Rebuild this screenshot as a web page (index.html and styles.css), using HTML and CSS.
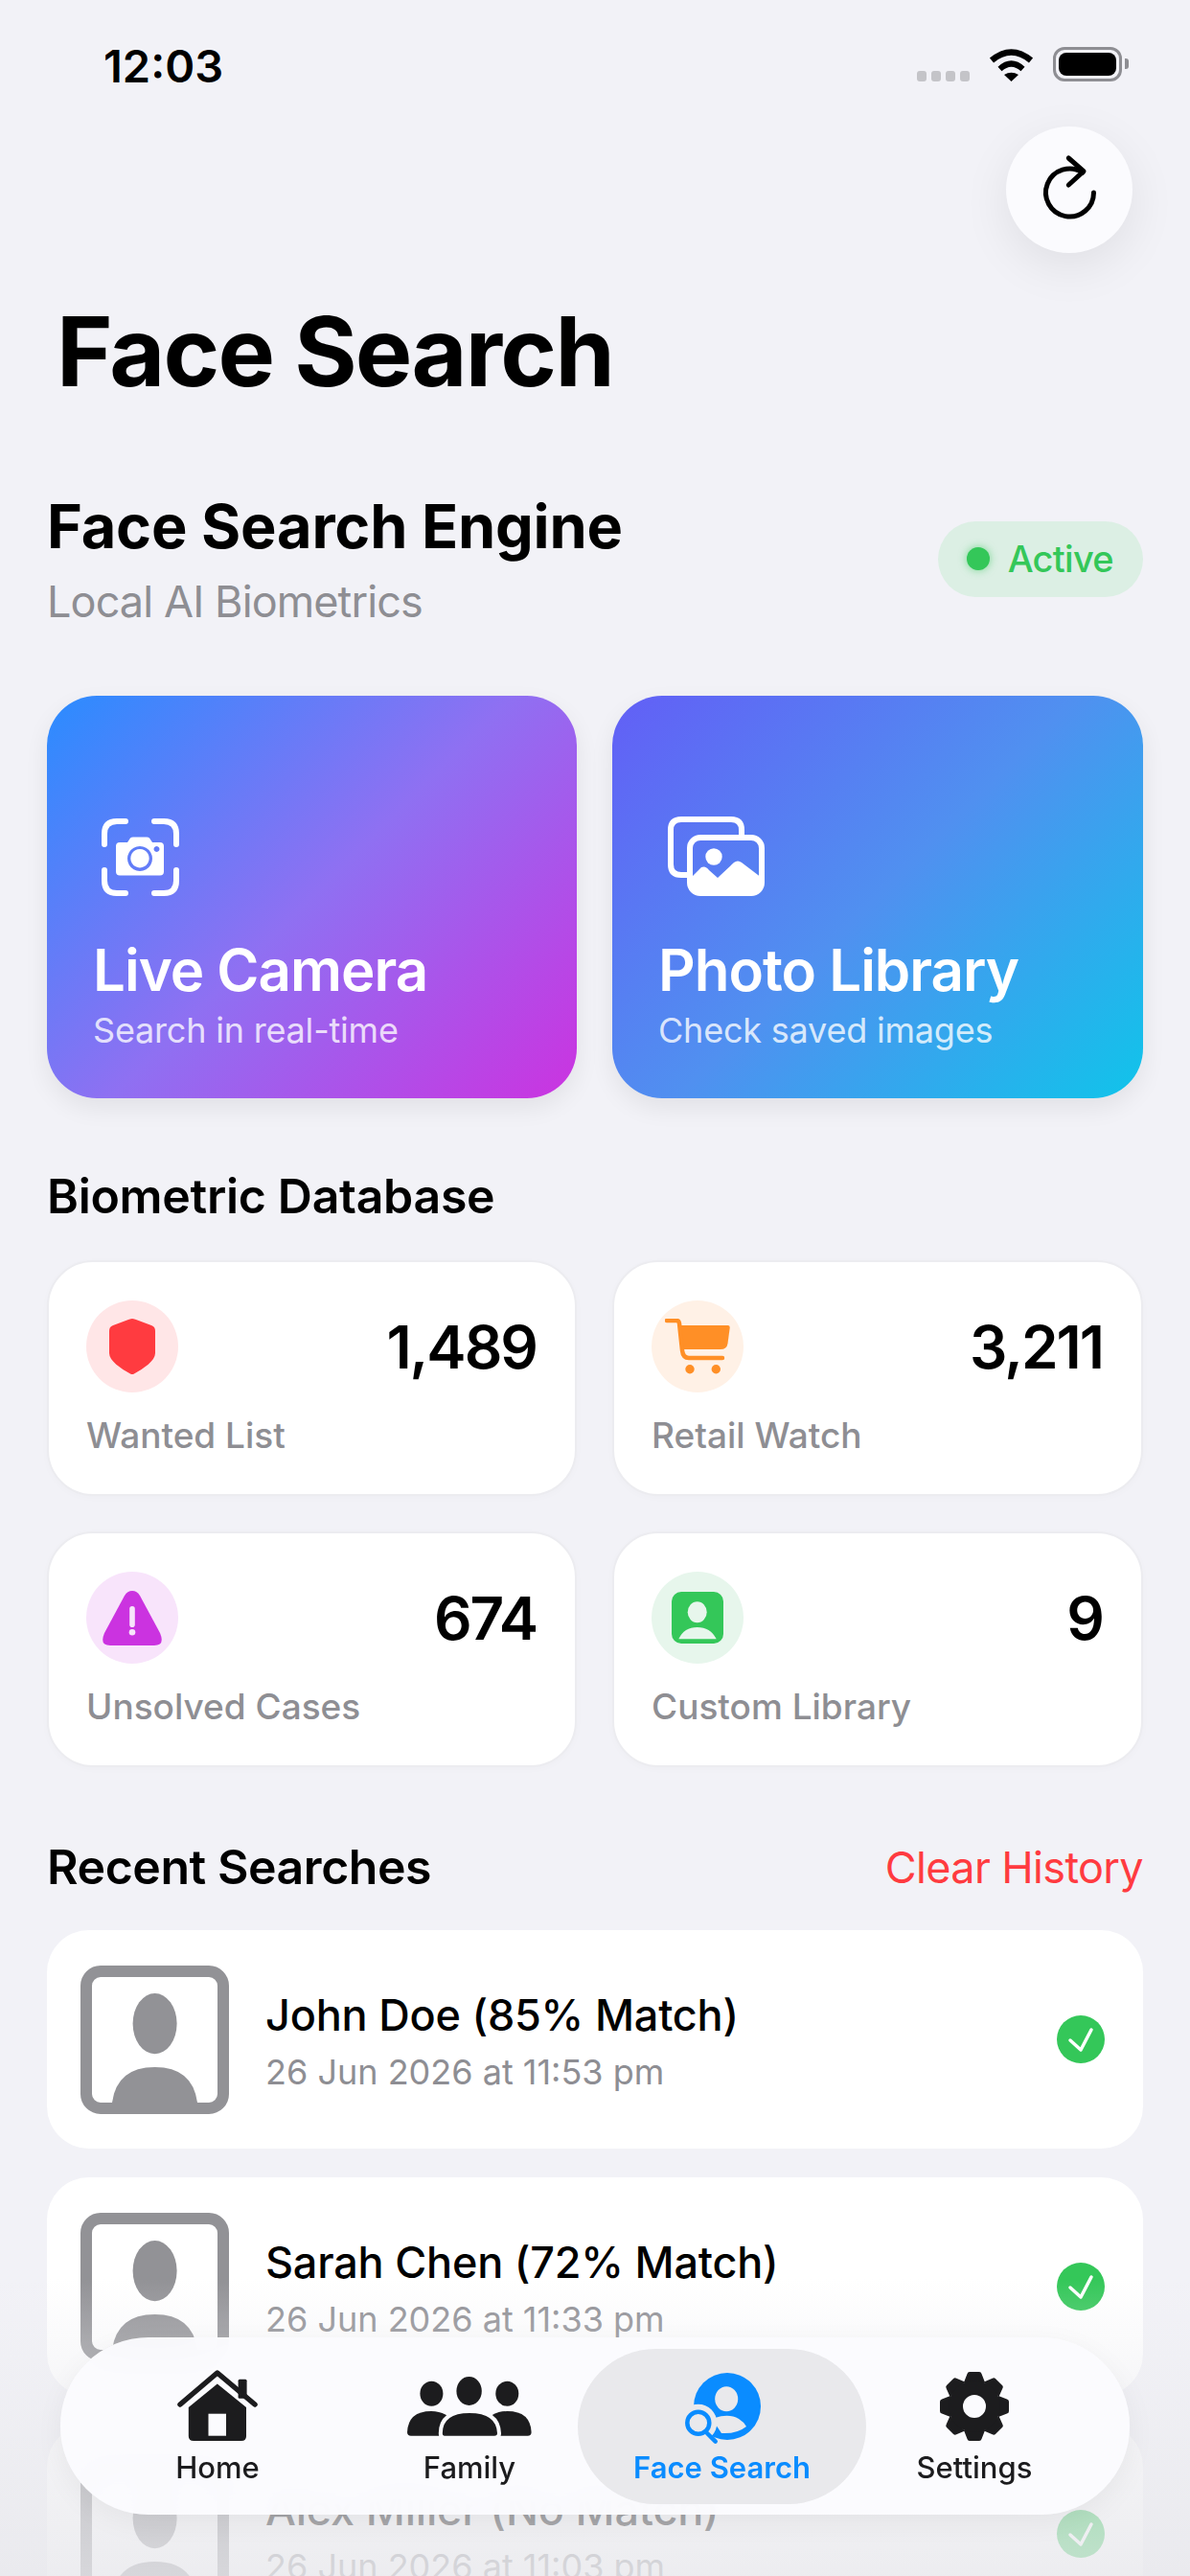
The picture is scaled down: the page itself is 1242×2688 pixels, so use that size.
FILE: index.html
```html
<!DOCTYPE html>
<html lang="en">
<head>
<meta charset="UTF-8">
<meta name="viewport" content="width=device-width, initial-scale=1.0">
<title>Face Search</title>
<link rel="stylesheet" href="styles.css">
</head>
<body>
<div class="screen">
  <div class="status">
    <span class="time">12:03</span>
    <div class="status-icons">
      <div class="signal"><i></i><i></i><i></i><i></i></div>
      <svg class="wifi" viewBox="0 0 47 36" width="47" height="36">
        <path d="M3 14 Q23.5 -3 44 14" fill="none" stroke="#000" stroke-width="6.5"/>
        <path d="M11.5 23 Q23.5 12 35.500 23" fill="none" stroke="#000" stroke-width="6"/>
        <path d="M16 29 Q23.500 24.500 31 29 L23.500 36 Z" fill="#000"/>
      </svg>
      <div class="battery"><div class="battery-fill"></div></div>
      <div class="battery-nub"></div>
    </div>
  </div>

  <div class="top-row">
    <button class="refresh">
      <svg viewBox="0 0 60 80" width="60" height="80">
        <path d="M29.300 7 L45 20.700 L29.300 35" fill="none" stroke="#000" stroke-width="5" stroke-linecap="round" stroke-linejoin="round"/>
        <path d="M55.500 43 A25 25 0 1 1 44 22" fill="none" stroke="#000" stroke-width="5" stroke-linecap="round"/>
      </svg>
    </button>
  </div>

  <div class="content">
    <h1 class="title">Face Search</h1>

    <div class="engine">
      <div class="engine-text">
        <div class="engine-name">Face Search Engine</div>
        <div class="engine-sub">Local AI Biometrics</div>
      </div>
      <div class="pill"><span class="pill-dot"></span>Active</div>
    </div>

    <div class="actions">
      <div class="action action-camera">
        <svg class="action-icon" viewBox="0 0 81 81" width="81" height="81">
          <path d="M25 3 H16 Q3 3 3 16 V27 M55 3 H65 Q78 3 78 16 V27 M3 54 V65 Q3 78 16 78 H25 M78 54 V65 Q78 78 65 78 H55" fill="none" stroke="#fff" stroke-width="6" stroke-linecap="round"/>
          <path fill="#fff" fill-rule="evenodd" d="M19 25 H27 L30 20.500 Q31 19.500 33 19.500 H47 Q49 19.500 50 20.500 L53 25 H61 Q65 25 65 29 V55.500 Q65 59.500 61 59.500 H19 Q15 59.500 15 55.500 V29 Q15 25 19 25 Z M40 29 A13 13 0 1 0 40.010 29 Z M40 32 A9.700 9.700 0 1 1 39.990 32 Z M57.500 29 A3 3 0 1 0 57.510 29 Z"/>
        </svg>
        <div class="action-title">Live Camera</div>
        <div class="action-sub">Search in real-time</div>
      </div>
      <div class="action action-library">
        <svg class="action-icon icon-library" viewBox="0 0 101 83" width="101" height="83">
          <path d="M20 61 H14 Q3 61 3 50 V14 Q3 3 14 3 H66 Q77 3 77 14 V20" fill="none" stroke="#fff" stroke-width="6"/>
          <rect x="23" y="22" width="75" height="58" rx="11" fill="none" stroke="#fff" stroke-width="6"/>
          <path d="M23 65 L35 53 Q39.500 51 43 56 L52 64 L69 48 Q73 45 77 48 L98 64 V70 Q98 80 88 80 H33 Q23 80 23 70 Z" fill="#fff"/>
          <ellipse cx="48" cy="42" rx="8.700" ry="8.700" fill="#fff"/>
        </svg>
        <div class="action-title">Photo Library</div>
        <div class="action-sub">Check saved images</div>
      </div>
    </div>

    <h2 class="section-title section-biometric">Biometric Database</h2>
    <div class="stats">
      <div class="stat">
        <div class="stat-top">
          <div class="stat-icon tint-red">
            <svg viewBox="0 0 48 58" width="48" height="58"><path fill="#ff3b40" d="M24 0 C26 0 27 .8 28 1 L44 7 C47 8 48 10 48 13 V36 C48 44 36 52 26 57.400 Q24 58.500 22 57.400 C12 52 0 44 0 36 V13 C0 10 1 8 4 7 L20 1 C21 .8 22 0 24 0 Z"/></svg>
          </div>
          <div class="stat-num">1,489</div>
        </div>
        <div class="stat-label">Wanted List</div>
      </div>
      <div class="stat">
        <div class="stat-top">
          <div class="stat-icon tint-orange">
            <svg viewBox="0 0 68 58" width="68" height="58">
              <path fill="#ff8f26" d="M15 7 H66 Q68 7 67.700 9.500 L65.500 26 Q64.500 32 58 32 H18 Z"/>
              <path d="M2 2 H12 Q14.500 2 15 5 L18 33 Q18.800 41 25 41 H60" fill="none" stroke="#ff8f26" stroke-width="4.500" stroke-linecap="round"/>
              <circle cx="26" cy="52.700" r="4.700" fill="#ff8f26"/>
              <circle cx="53.300" cy="52.700" r="4.700" fill="#ff8f26"/>
            </svg>
          </div>
          <div class="stat-num">3,211</div>
        </div>
        <div class="stat-label">Retail Watch</div>
      </div>
      <div class="stat">
        <div class="stat-top">
          <div class="stat-icon tint-purple">
            <svg viewBox="0 0 62 57" width="62" height="57">
              <path fill="#cb33e0" d="M31 0 Q36 0 39 5 L60 44 Q65.500 57 54 57 H8 Q-3.500 57 2 44 L23 5 Q26 0 31 0 Z"/>
              <rect x="28.200" y="16" width="5.600" height="22" rx="2.800" fill="#f8e4fb"/>
              <circle cx="31" cy="43.300" r="3.300" fill="#f8e4fb"/>
            </svg>
          </div>
          <div class="stat-num">674</div>
        </div>
        <div class="stat-label">Unsolved Cases</div>
      </div>
      <div class="stat">
        <div class="stat-top">
          <div class="stat-icon tint-green">
            <svg viewBox="0 0 54 54" width="54" height="54">
              <rect width="54" height="54" rx="10" fill="#34c759"/>
              <ellipse cx="26.700" cy="21.300" rx="10" ry="11" fill="#e7f6ec"/>
              <path d="M7.300 49.300 Q13 37 26.700 37 Q40.500 37 46.700 49.300 Z" fill="#e7f6ec"/>
            </svg>
          </div>
          <div class="stat-num">9</div>
        </div>
        <div class="stat-label">Custom Library</div>
      </div>
    </div>

    <div class="recent-head">
      <h2 class="section-title section-recent">Recent Searches</h2>
      <span class="clear">Clear History</span>
    </div>
    <div class="rows">
      <div class="row">
        <svg class="thumb" viewBox="0 0 155 155" width="155" height="155">
          <rect x="6" y="6" width="143" height="143" rx="15" fill="none" stroke="#929296" stroke-width="12"/>
          <ellipse cx="77.600" cy="60.600" rx="23" ry="31.600" fill="#929296"/>
          <path d="M33 143 Q38 106 77.600 106 Q117 106 122 143 Z" fill="#929296"/>
        </svg>
        <div class="row-text">
          <div class="row-name">John Doe (85% Match)</div>
          <div class="row-date">26 Jun 2026 at 11:53 pm</div>
        </div>
        <svg class="check" viewBox="0 0 50 50" width="50" height="50">
          <circle cx="25" cy="25" r="25" fill="#34c759"/>
          <path d="M14 26 L25 36 L36 15" fill="none" stroke="#fff" stroke-width="3.500" stroke-linecap="round" stroke-linejoin="round"/>
        </svg>
      </div>
      <div class="row">
        <svg class="thumb" viewBox="0 0 155 155" width="155" height="155">
          <rect x="6" y="6" width="143" height="143" rx="15" fill="none" stroke="#929296" stroke-width="12"/>
          <ellipse cx="77.600" cy="60.600" rx="23" ry="31.600" fill="#929296"/>
          <path d="M33 143 Q38 106 77.600 106 Q117 106 122 143 Z" fill="#929296"/>
        </svg>
        <div class="row-text">
          <div class="row-name">Sarah Chen (72% Match)</div>
          <div class="row-date">26 Jun 2026 at 11:33 pm</div>
        </div>
        <svg class="check" viewBox="0 0 50 50" width="50" height="50">
          <circle cx="25" cy="25" r="25" fill="#34c759"/>
          <path d="M14 26 L25 36 L36 15" fill="none" stroke="#fff" stroke-width="3.500" stroke-linecap="round" stroke-linejoin="round"/>
        </svg>
      </div>
      <div class="row">
        <svg class="thumb" viewBox="0 0 155 155" width="155" height="155">
          <rect x="6" y="6" width="143" height="143" rx="15" fill="none" stroke="#929296" stroke-width="12"/>
          <ellipse cx="77.600" cy="60.600" rx="23" ry="31.600" fill="#929296"/>
          <path d="M33 143 Q38 106 77.600 106 Q117 106 122 143 Z" fill="#929296"/>
        </svg>
        <div class="row-text">
          <div class="row-name">Alex Miller (No Match)</div>
          <div class="row-date">26 Jun 2026 at 11:03 pm</div>
        </div>
        <svg class="check" viewBox="0 0 50 50" width="50" height="50">
          <circle cx="25" cy="25" r="25" fill="#34c759"/>
          <path d="M14 26 L25 36 L36 15" fill="none" stroke="#fff" stroke-width="3.500" stroke-linecap="round" stroke-linejoin="round"/>
        </svg>
      </div>
    </div>
  </div>

  <div class="fade"></div>

  <div class="tabbar">
    <div class="tab">
      <svg class="icon-home" viewBox="0 0 84 76" width="84" height="76">
        <path fill="#1c1c1e" d="M41.800 14.500 L72 39 V69 Q72 74 67 74 H17 Q11.800 74 11.800 69 V39 Z"/>
        <rect x="32.500" y="45.700" width="18.500" height="23" fill="#fbfbfe"/>
        <rect x="63.600" y="9.700" width="9" height="20" rx="1.500" fill="#1c1c1e"/>
        <path d="M3 36 L41.800 3 L81 36" fill="none" stroke="#1c1c1e" stroke-width="5.500" stroke-linecap="round" stroke-linejoin="round"/>
      </svg>
      <span>Home</span>
    </div>
    <div class="tab tab-family">
      <svg class="icon-family" viewBox="0 0 130 62" width="130" height="62">
        <ellipse cx="25.400" cy="17.700" rx="12" ry="13" fill="#1c1c1e"/>
        <ellipse cx="104.300" cy="17.700" rx="12" ry="13" fill="#1c1c1e"/>
        <ellipse cx="64.600" cy="15" rx="13.200" ry="15" fill="#1c1c1e"/>
        <path fill="#1c1c1e" d="M0 58 Q1 36 25 36 Q42 36 50 50 V61.700 H4 Q0 61.700 0 58 Z"/>
        <path fill="#1c1c1e" d="M129.600 58 Q128.600 36 104.600 36 Q87.600 36 79.600 50 V61.700 H125.600 Q129.600 61.700 129.600 58 Z"/>
        <path fill="#1c1c1e" stroke="#fbfbfe" stroke-width="4" d="M34.800 59 Q35 36 65 36 Q95 36 96 59 Q96 63.700 91 63.700 H39 Q34.800 63.700 34.800 59 Z"/>
      </svg>
      <span>Family</span>
    </div>
    <div class="tab tab-active">
      <svg class="icon-face" viewBox="0 0 90 84" width="90" height="84">
        <circle cx="50" cy="41" r="35" fill="#0a8cff"/>
        <ellipse cx="49.200" cy="33.300" rx="12" ry="13" fill="#e9e9ec"/>
        <path fill="#e9e9ec" d="M37 53 Q52 48 62 54 Q67 57 70 62 Q60 70 44 69 L38 60 Z"/>
        <circle cx="19.800" cy="58.300" r="19.500" fill="#e9e9ec"/>
        <circle cx="19.800" cy="58.300" r="11.500" fill="none" stroke="#0a8cff" stroke-width="4.500"/>
        <path d="M29 69 L37.700 77.700" stroke="#0a8cff" stroke-width="4.500" stroke-linecap="round"/>
      </svg>
      <span>Face Search</span>
    </div>
    <div class="tab">
      <svg class="icon-gear" viewBox="-36 -36 72 72" width="72" height="72">
        <defs><path id="tooth" d="M-11 -25 L-7.500 -34 Q-7 -36 -5 -36 H5 Q7 -36 7.500 -34 L11 -25 Z" fill="#1c1c1e"/></defs>
        <use href="#tooth"/>
        <use href="#tooth" transform="rotate(45)"/>
        <use href="#tooth" transform="rotate(90)"/>
        <use href="#tooth" transform="rotate(135)"/>
        <use href="#tooth" transform="rotate(180)"/>
        <use href="#tooth" transform="rotate(225)"/>
        <use href="#tooth" transform="rotate(270)"/>
        <use href="#tooth" transform="rotate(315)"/>
        <circle r="19.500" fill="none" stroke="#1c1c1e" stroke-width="15"/>
      </svg>
      <span>Settings</span>
    </div>
  </div>
</div>
</body>
</html>
```
FILE: styles.css
```css
* {
  box-sizing: border-box;
}
html, body {
  margin: 0;
  padding: 0;
}
body {
  font-family: Inter, "Noto Sans", sans-serif;
  background-color: #f2f2f7;
  color: #000000;
}
.screen {
  position: relative;
  width: 1242px;
  height: 2688px;
  overflow: hidden;
}

/* status bar */
.status {
  display: flex;
  justify-content: space-between;
  align-items: center;
  height: 36px;
  margin-top: 49px;
  padding: 0 64px 0 108px;
}
.time {
  padding-top: 4px;
  font-size: 47px;
  font-weight: 600;
  line-height: 36px;
}
.status-icons {
  display: flex;
  align-items: flex-end;
  height: 36px;
}
.signal {
  display: flex;
  gap: 5px;
  margin-right: 20px;
}
.signal i {
  display: block;
  width: 10px;
  height: 11px;
  border-radius: 3px;
  background-color: #c4c4c8;
}
.wifi {
  display: block;
  margin-right: 20px;
}
.battery {
  width: 72px;
  height: 36px;
  padding: 3px;
  border: 3px solid #8e8e93;
  border-radius: 12px;
}
.battery-fill {
  width: 100%;
  height: 100%;
  border-radius: 8px;
  background-color: #000000;
}
.battery-nub {
  width: 4px;
  height: 11px;
  margin: 0 0 13px 3px;
  border-radius: 0 3px 3px 0;
  background-color: #8e8e93;
}

/* refresh */
.top-row {
  display: flex;
  justify-content: flex-end;
  padding: 47px 60px 0 0;
}
.refresh {
  display: flex;
  align-items: center;
  justify-content: center;
  width: 132px;
  height: 132px;
  padding: 0;
  border: none;
  border-radius: 50%;
  background-color: #fbfbfe;
  box-shadow: 0 14px 50px rgba(0, 0, 0, 0.08);
}

.content {
  padding: 0 49px;
}
.title {
  margin: 43px 0 0 10px;
  font-size: 100px;
  font-weight: 700;
  line-height: 120px;
  letter-spacing: -1.8px;
}

/* engine row */
.engine {
  display: flex;
  justify-content: space-between;
  align-items: center;
  margin-top: 84px;
}
.engine-name {
  font-size: 63px;
  font-weight: 700;
  line-height: 76px;
  letter-spacing: -0.2px;
}
.engine-sub {
  margin-top: 14px;
  font-size: 45px;
  line-height: 54px;
  letter-spacing: -0.9px;
  color: #8e8e93;
}
.pill {
  display: flex;
  align-items: center;
  gap: 19px;
  height: 79px;
  padding: 0 31px 0 30px;
  border-radius: 40px;
  background-color: #dcefe4;
  color: #34c759;
  font-size: 38px;
  font-weight: 500;
  letter-spacing: -0.7px;
}
.pill-dot {
  width: 24px;
  height: 24px;
  border-radius: 50%;
  background-color: #34c759;
  box-shadow: 0 0 8px rgba(52, 199, 89, 0.6);
}

/* big action cards */
.actions {
  display: grid;
  grid-template-columns: 553px 554px;
  gap: 37px;
  margin-top: 71px;
}
.action {
  display: flex;
  flex-direction: column;
  justify-content: flex-end;
  height: 420px;
  padding: 0 48px 49px;
  border-radius: 52px;
  color: #ffffff;
  box-shadow: 0 10px 26px rgba(0, 0, 0, 0.07);
}
.action-camera {
  background: linear-gradient(135deg, #2a8cff 0%, #8f70f2 50%, #cb33e0 100%);
}
.action-library {
  background: linear-gradient(135deg, #625ff6 0%, #5090f0 50%, #10c4ea 100%);
}
.action-icon {
  display: block;
  margin: 0 0 41px 9px;
}
.icon-library {
  margin-left: 10px;
}
.action-title {
  font-size: 60px;
  font-weight: 600;
  line-height: 72px;
  letter-spacing: -1px;
}
.action-sub {
  margin-top: 5px;
  font-size: 36px;
  line-height: 44px;
  letter-spacing: -0.2px;
  color: rgba(255, 255, 255, 0.8);
}

/* section headings */
.section-title {
  margin: 0;
  font-size: 50px;
  font-weight: 600;
  line-height: 60px;
  letter-spacing: -0.3px;
}
.section-biometric {
  margin-top: 72px;
}
.section-recent {
  letter-spacing: -0.45px;
}

/* stat cards */
.stats {
  display: grid;
  grid-template-columns: 553px 554px;
  gap: 37px;
  margin-top: 37px;
}
.stat {
  height: 246px;
  padding: 40px 40px 0 39px;
  border: 2px solid #ececf0;
  border-radius: 48px;
  background-color: #ffffff;
  box-shadow: 0 2px 8px rgba(0, 0, 0, 0.02);
}
.stat-top {
  display: flex;
  justify-content: space-between;
  align-items: center;
}
.stat-icon {
  display: flex;
  align-items: center;
  justify-content: center;
  width: 96px;
  height: 96px;
  border-radius: 50%;
}
.tint-red { background-color: #ffe6e7; }
.tint-orange { background-color: #fff1e6; }
.tint-purple { background-color: #f8e4fb; }
.tint-green { background-color: #e7f6ec; }
.stat-num {
  font-size: 62px;
  font-weight: 600;
  letter-spacing: -2px;
}
.stat-label {
  margin-top: 23px;
  font-size: 37px;
  font-weight: 500;
  line-height: 44px;
  color: #8e8e93;
}

/* recent searches */
.recent-head {
  display: flex;
  justify-content: space-between;
  align-items: center;
  margin-top: 74px;
}
.clear {
  font-size: 45px;
  letter-spacing: -0.65px;
  color: #ff3b40;
}
.rows {
  display: flex;
  flex-direction: column;
  gap: 30px;
  margin-top: 36px;
}
.row {
  display: flex;
  align-items: center;
  flex-shrink: 0;
  height: 228px;
  padding: 0 40px 0 35px;
  border-radius: 44px;
  background-color: #ffffff;
}
.thumb {
  flex-shrink: 0;
}
.row-text {
  flex: 1;
  margin-left: 38px;
  padding-top: 4px;
}
.row-name {
  font-size: 45px;
  font-weight: 500;
  line-height: 54px;
  letter-spacing: -0.2px;
}
.row-date {
  margin-top: 10px;
  font-size: 36px;
  line-height: 44px;
  color: #8e8e93;
}

/* floating tab bar and the fade behind it */
.fade {
  position: absolute;
  left: 0;
  right: 0;
  bottom: 0;
  height: 310px;
  background: linear-gradient(to bottom, rgba(240, 240, 244, 0) 0%, rgba(236, 236, 240, 0.5) 40%, rgba(232, 232, 236, 0.8) 100%);
}
.tabbar {
  position: absolute;
  left: 63px;
  top: 2439px;
  display: grid;
  grid-template-columns: 226px 263px 301px 226px;
  width: 1116px;
  height: 185px;
  padding: 12px 0 11px 51px;
  border-radius: 92px;
  background-color: rgba(251, 251, 254, 0.96);
  box-shadow: 0 8px 30px rgba(0, 0, 0, 0.05);
  backdrop-filter: blur(16px);
}
.tab {
  display: flex;
  flex-direction: column;
  align-items: center;
  justify-content: flex-end;
  padding-bottom: 18px;
  border-radius: 81px;
  color: #1c1c1e;
  font-size: 31px;
  font-weight: 500;
  line-height: 40px;
}
.tab svg {
  display: block;
}
.tab-family {
  margin-left: 37px;
}
.icon-home {
  margin-bottom: 6px;
}
.icon-family {
  margin-bottom: 13px;
}
.icon-face {
  margin-bottom: 1px;
}
.icon-gear {
  margin-bottom: 8px;
}
.tab-active {
  background-color: #e9e9ec;
  color: #0a8cff;
  font-weight: 600;
}
```
